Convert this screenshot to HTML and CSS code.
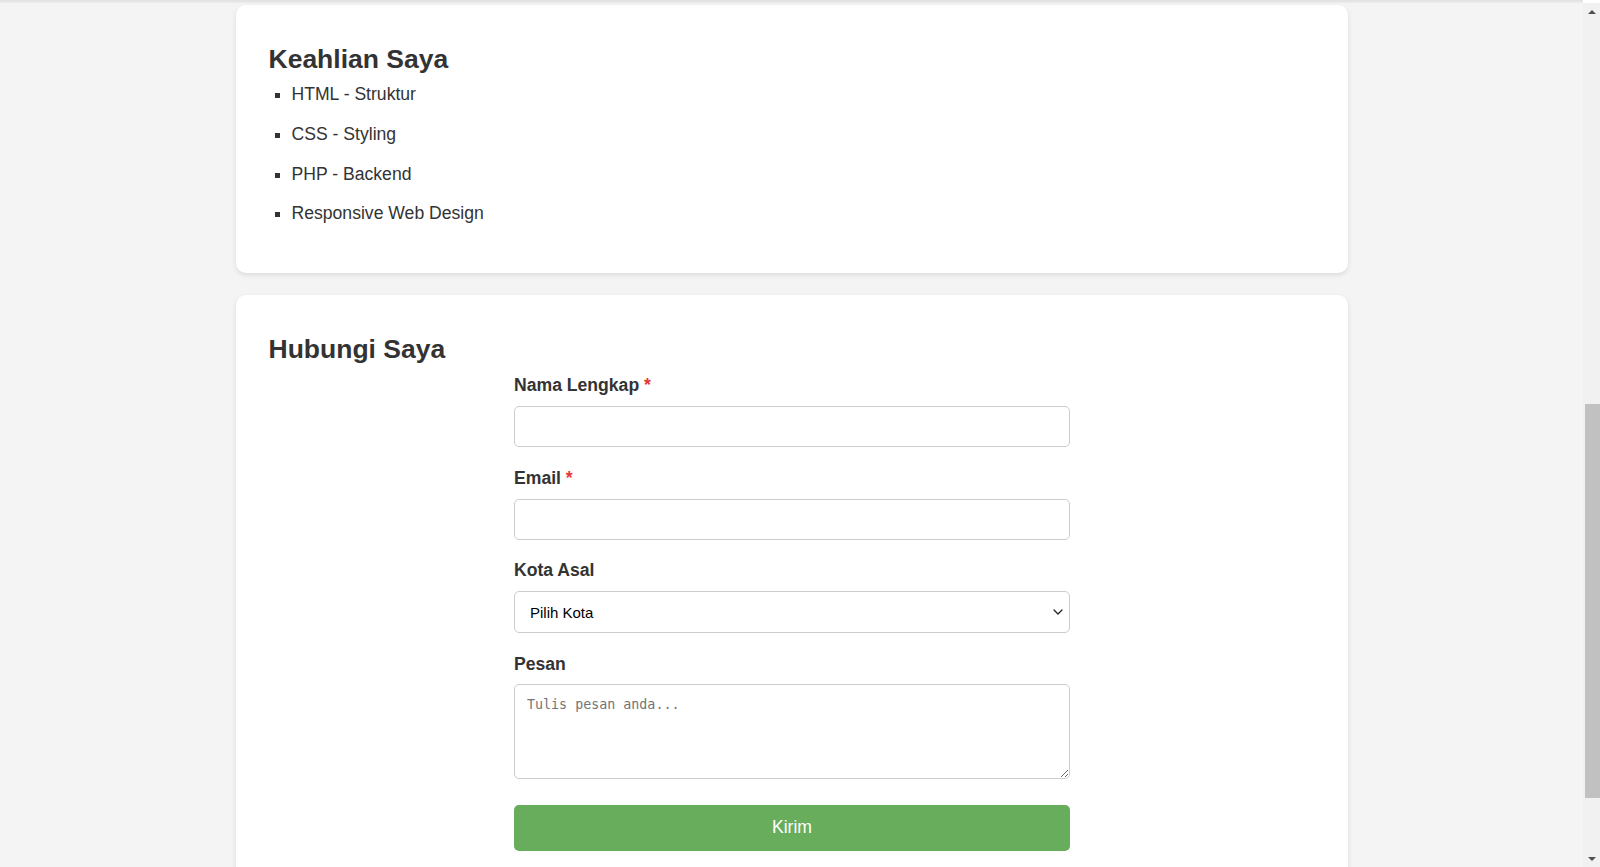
FILE: index.html
```html
<!DOCTYPE html>
<html lang="id">
<head>
<meta charset="utf-8">
<title>Portofolio</title>
<link rel="stylesheet" href="styles.css">
</head>
<body>
<div class="viewport">
  <div class="page">
    <div class="top-edge"></div>
    <main class="container">
      <section class="card skills">
        <h2>Keahlian Saya</h2>
        <ul class="skill-list">
          <li>HTML - Struktur</li>
          <li>CSS - Styling</li>
          <li>PHP - Backend</li>
          <li>Responsive Web Design</li>
        </ul>
      </section>
      <section class="card contact">
        <h2>Hubungi Saya</h2>
        <form class="contact-form">
          <div class="form-group">
            <label for="nama">Nama Lengkap <span class="req">*</span></label>
            <input id="nama" type="text">
          </div>
          <div class="form-group">
            <label for="email">Email <span class="req">*</span></label>
            <input id="email" type="email">
          </div>
          <div class="form-group">
            <label for="kota">Kota Asal</label>
            <div class="select-wrap">
              <select id="kota">
                <option>Pilih Kota</option>
                <option>Jakarta</option>
                <option>Bandung</option>
                <option>Surabaya</option>
              </select>
              <svg class="select-chevron" width="10" height="6" viewBox="0 0 10 6" aria-hidden="true">
                <path d="M1 1 L5 5 L9 1" fill="none" stroke="#222" stroke-width="1.3" stroke-linecap="round" stroke-linejoin="round"/>
              </svg>
            </div>
          </div>
          <div class="form-group">
            <label for="pesan" class="label-tight">Pesan</label>
            <textarea id="pesan" placeholder="Tulis pesan anda..."></textarea>
          </div>
          <button type="button" class="btn-submit">Kirim</button>
        </form>
      </section>
    </main>
  </div>
  <div class="scrollbar">
    <div class="sb-btn"><span class="arrow-up"></span></div>
    <div class="sb-track"><div class="sb-thumb"></div></div>
    <div class="sb-btn"><span class="arrow-down"></span></div>
  </div>
</div>
</body>
</html>
```
FILE: styles.css
```css
html, body {
  margin: 0;
  height: 100%;
}

body {
  font-family: "Liberation Sans", Arial, sans-serif;
  color: #333;
  overflow: hidden;
}

.viewport {
  display: flex;
  height: 100vh;
}

.page {
  flex: 1;
  background: #f4f4f4;
  overflow: hidden;
  display: flex;
  flex-direction: column;
}

.top-edge {
  flex: none;
  height: 3px;
  background: linear-gradient(#e0e0e0, #ececec);
}

.container {
  flex: none;
  width: 1112px;
  margin: 2px auto 0;
}

.card {
  background: #fff;
  border-radius: 10px;
  box-shadow: 0 2px 5px rgba(0, 0, 0, 0.1);
  padding: 40px 32px 40px 33px;
  margin-bottom: 22px;
}

.card.skills {
  padding-bottom: 39px;
}

.card h2 {
  margin: 0;
  font-size: 26.5px;
  line-height: 29px;
  font-weight: bold;
}

.skill-list {
  list-style: square;
  margin: 1px 0 0;
  padding-left: 23px;
}

.skill-list li {
  font-size: 17.6px;
  line-height: 27.8px;
  padding: 6px 0;
}

.contact-form {
  width: 556px;
  margin: 11px auto 0;
}

.form-group {
  margin-bottom: 20.6px;
}

.form-group label {
  display: block;
  font-weight: bold;
  font-size: 17.6px;
  line-height: 20px;
  margin-bottom: 11px;
}

.form-group .label-tight {
  margin-bottom: 10px;
}

.req {
  color: #e53935;
}

.form-group input,
.form-group select,
.form-group textarea {
  display: block;
  box-sizing: border-box;
  width: 100%;
  border: 1px solid #ccc;
  border-radius: 5px;
  background: #fff;
  margin: 0;
}

.form-group input {
  height: 41px;
  padding: 0 12px;
  font-family: "Liberation Sans", Arial, sans-serif;
  font-size: 15px;
}

.select-wrap {
  position: relative;
}

.form-group select {
  appearance: none;
  -webkit-appearance: none;
  height: 42px;
  padding: 0 30px 0 15px;
  font-family: "Liberation Sans", Arial, sans-serif;
  font-size: 15px;
  color: #000;
}

.select-chevron {
  position: absolute;
  right: 7px;
  top: 18px;
  pointer-events: none;
}

.form-group textarea {
  height: 95px;
  padding: 12px;
  font-family: "DejaVu Sans Mono", "Liberation Mono", monospace;
  font-size: 13.33px;
  resize: vertical;
}

.form-group textarea::placeholder {
  color: #757575;
}

.btn-submit {
  display: block;
  width: 100%;
  height: 46px;
  margin-top: 26px;
  border: none;
  border-radius: 5px;
  background: #68ad5c;
  color: #fff;
  font-family: "Liberation Sans", Arial, sans-serif;
  font-size: 17.6px;
}

.scrollbar {
  flex: none;
  width: 17px;
  background: #f1f1f1;
  display: flex;
  flex-direction: column;
  margin-top: 3px;
}

.sb-btn {
  flex: none;
  height: 17px;
  display: flex;
  align-items: center;
  justify-content: center;
}

.arrow-up {
  width: 0;
  height: 0;
  border-left: 4px solid transparent;
  border-right: 4px solid transparent;
  border-bottom: 4px solid #505050;
}

.arrow-down {
  width: 0;
  height: 0;
  border-left: 4px solid transparent;
  border-right: 4px solid transparent;
  border-top: 4px solid #505050;
}

.sb-track {
  flex: 1;
}

.sb-thumb {
  margin: 384px 0 0 2px;
  width: 15px;
  height: 394px;
  background: #c1c1c1;
}
```
